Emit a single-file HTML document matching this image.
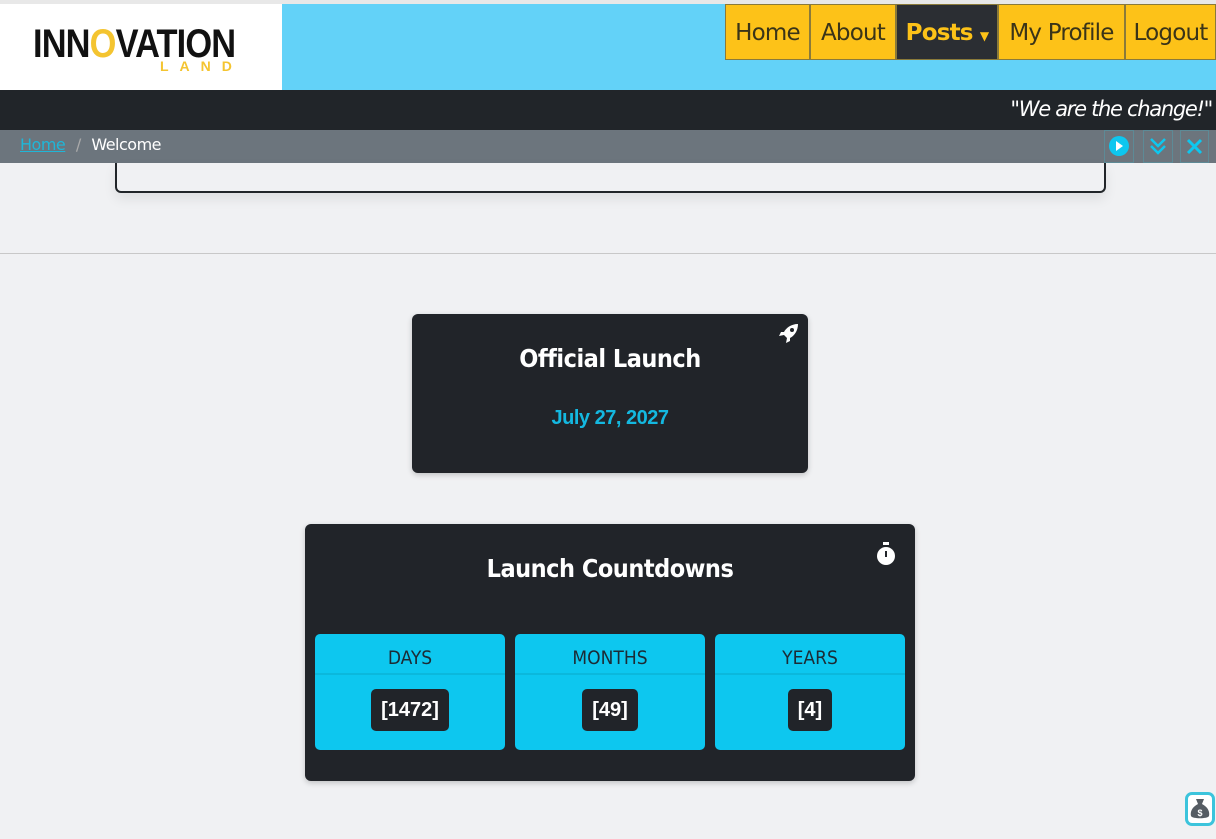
<!DOCTYPE html>
<html><head><meta charset="utf-8"><style>
*{box-sizing:border-box;margin:0;padding:0}
body{width:1216px;height:839px;overflow:hidden;background:#f0f1f3;font-family:"Liberation Sans",sans-serif;position:relative}
.abs{position:absolute}
.nav a{position:absolute;top:4px;height:56px;background:#fdc218;border:1px solid #8a7a3a;color:#3a3418;font-size:23px;line-height:56px;text-align:center;font-family:"DejaVu Sans","Liberation Sans",sans-serif;letter-spacing:-0.8px}
.card{background:#212429;border-radius:6px;color:#fff;box-shadow:0 2px 6px rgba(0,0,0,.2)}
.box{position:absolute;top:110px;width:190px;height:116px;background:#0dc7ef;border-radius:5px;text-align:center}
.box .h{height:41px;border-bottom:2px solid #0bb8dc;line-height:48px;font-size:19px;color:#1c2b35;font-family:"DejaVu Sans Condensed","Liberation Sans",sans-serif}
.box .v{display:inline-block;margin-top:14px;background:#212429;color:#fff;border-radius:5px;padding:0 10px;height:42px;line-height:42px;font-weight:bold;font-size:20px;font-family:"Liberation Sans Narrow","Liberation Sans",sans-serif}
.ib{position:absolute;top:130px;width:30px;height:33px;border:1px solid #5d8a96}
</style></head><body>
<div class="abs" style="left:0;top:0;width:1216px;height:4px;background:#e8e8e8"></div>
<div class="abs" style="left:0;top:4px;width:282px;height:86px;background:#fff"></div>
<div class="abs" style="left:282px;top:4px;width:934px;height:86px;background:#63d2f8"></div>
<div class="abs" style="left:33px;top:22px;font:bold 40px 'Liberation Sans',sans-serif;color:#111;letter-spacing:-1px;transform:scaleX(0.86);transform-origin:left">INN<span style="color:#f4c430">O</span>VATION</div>
<div class="abs" style="left:160px;top:58px;font:bold 14px 'Liberation Sans',sans-serif;color:#f4c430;letter-spacing:11px">LAND</div>
<div class="nav">
<a style="left:725px;width:85px">Home</a>
<a style="left:810px;width:86px">About</a>
<a style="left:896px;width:102px;background:#2b2e33;color:#fdc218;font-weight:bold">Posts <span style="font-size:12px">▼</span></a>
<a style="left:998px;width:127px">My Profile</a>
<a style="left:1125px;width:91px">Logout</a>
</div>
<div class="abs" style="left:0;top:90px;width:1216px;height:40px;background:#212529"></div>
<div class="abs" style="right:4px;top:97px;color:#fff;font-style:italic;font-size:21px;font-family:'DejaVu Sans',sans-serif;letter-spacing:-1.3px">"We are the change!"</div>
<div class="abs" style="left:0;top:130px;width:1216px;height:33px;background:#6c757d"></div>
<div class="abs" style="left:20px;top:135px;font-size:16px;color:#fff;font-family:'DejaVu Sans',sans-serif;letter-spacing:-0.5px"><span style="color:#1fb6d8;text-decoration:underline">Home</span> <span style="color:#aaa;margin:0 6px">/</span> Welcome</div>
<div class="ib" style="left:1104px"><svg width="28" height="31" viewBox="0 0 28 31"><circle cx="14" cy="15" r="10" fill="#0dc7ef"/><path d="M11 10 L18 15 L11 20Z" fill="#fff"/></svg></div>
<div class="ib" style="left:1143px"><svg width="28" height="31" viewBox="0 0 28 31"><path d="M7 8 L14 15 L21 8 M7 15 L14 22 L21 15" stroke="#0dc7ef" stroke-width="2.5" fill="none"/></svg></div>
<div class="ib" style="left:1180px;width:29px"><svg width="27" height="31" viewBox="0 0 27 31"><path d="M7 9 L20 22 M20 9 L7 22" stroke="#0dc7ef" stroke-width="3"/></svg></div>
<div class="abs" style="left:115px;top:163px;width:991px;height:30px;border:2px solid #212529;border-top:none;border-radius:0 0 6px 6px;box-shadow:0 6px 12px rgba(0,0,0,.08)"></div>
<div class="abs" style="left:0;top:253px;width:1216px;height:1px;background:#c8c8c8"></div>
<div class="abs card" style="left:412px;top:314px;width:396px;height:159px;text-align:center">
<svg class="abs" style="right:8px;top:8px" width="22" height="22" viewBox="0 0 22 22"><path d="M20 2 C13 2 8 6 6 10 L3 10 L1 14 L6 13 L9 16 L8 21 L12 19 L12 16 C16 14 20 9 20 2Z" fill="#fff"/><circle cx="14" cy="8" r="2" fill="#212429"/></svg>
<div style="margin-top:30px;font-size:25px;font-family:'DejaVu Sans Condensed',sans-serif;font-weight:bold;letter-spacing:-0.5px">Official Launch</div>
<div style="margin-top:34px;font-size:20px;font-weight:bold;color:#14b8e0;letter-spacing:-0.5px">July 27, 2027</div>
</div>
<div class="abs card" style="left:305px;top:524px;width:610px;height:257px;text-align:center">
<svg class="abs" style="right:18px;top:18px" width="22" height="24" viewBox="0 0 22 24"><rect x="8" y="0" width="6" height="3" fill="#fff"/><circle cx="11" cy="14" r="9" fill="#fff"/><rect x="10" y="9" width="2" height="6" fill="#212429"/></svg>
<div style="margin-top:30px;font-size:25px;font-family:'DejaVu Sans Condensed',sans-serif;font-weight:bold;letter-spacing:-0.5px">Launch Countdowns</div>
<div class="box" style="left:10px"><div class="h">DAYS</div><div class="v">[1472]</div></div>
<div class="box" style="left:210px"><div class="h">MONTHS</div><div class="v">[49]</div></div>
<div class="box" style="left:410px"><div class="h">YEARS</div><div class="v">[4]</div></div>
</div>
<div class="abs" style="left:1185px;top:792px;width:30px;height:34px;border:3px solid #3cc4dc;border-radius:7px;background:#fff"><svg width="24" height="28" viewBox="0 0 24 28"><path d="M8 4 L16 4 L14 9 C20 12 22 17 21 21 C20 24 4 24 3 21 C2 17 4 12 10 9Z" fill="#555c63"/><text x="12" y="21" font-size="9" fill="#fff" text-anchor="middle" font-family="Liberation Sans" font-weight="bold">$</text></svg></div>
</body></html>
